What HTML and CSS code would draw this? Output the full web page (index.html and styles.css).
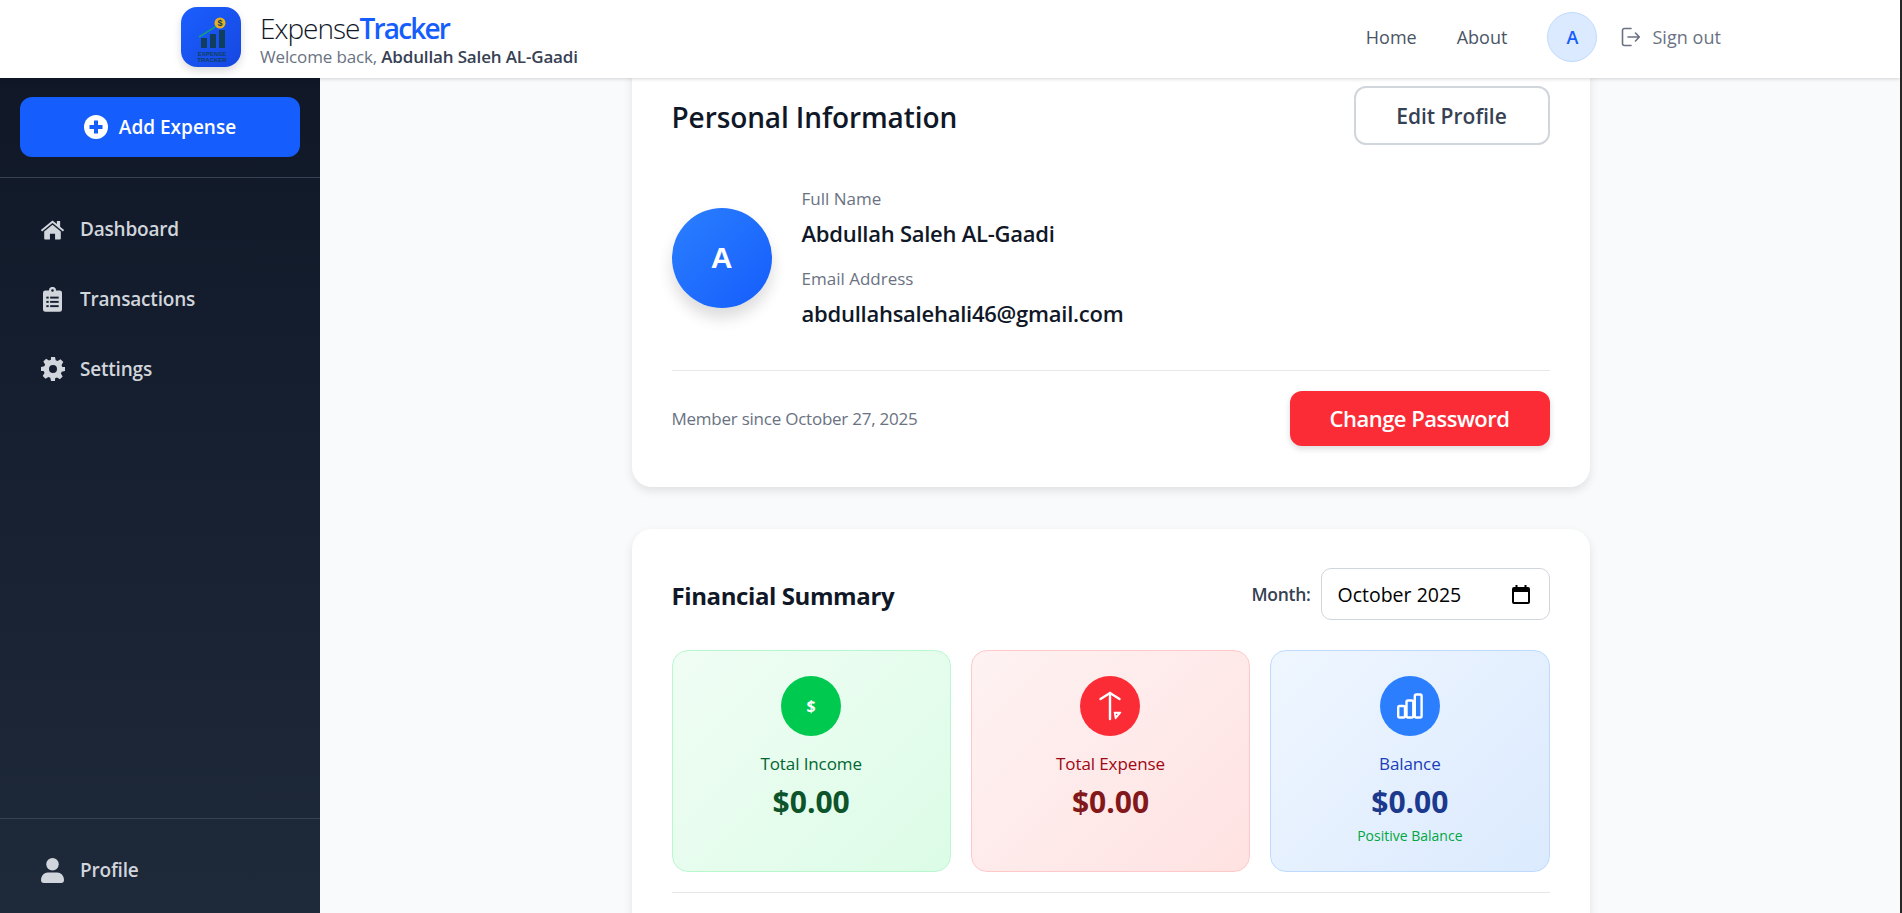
FILE: index.html
```html
<!DOCTYPE html>
<html lang="en">
<head>
<meta charset="utf-8">
<title>ExpenseTracker</title>
<link rel="stylesheet" href="styles.css">
</head>
<body>
<header class="topbar">
  <div class="topbar-inner">
    <div class="brand">
      <div class="logo">
        <svg viewBox="0 0 60 60" width="60" height="60">
          <rect x="20" y="31" width="6" height="10" fill="#0f3f5c"/>
          <rect x="29" y="27" width="6" height="14" fill="#0f3f5c"/>
          <rect x="38" y="23" width="6" height="18" fill="#0f3f5c"/>
          <path d="M18 30 L31 22 L35 19" fill="none" stroke="#12a07a" stroke-width="1.5"/>
          <path d="M38 15 L33 17 L36 21 Z" fill="#12a07a"/>
          <circle cx="39" cy="16" r="5.5" fill="#e8b020"/>
          <text x="39" y="19" class="logo-dollar">$</text>
          <text x="31" y="49" class="logo-text">EXPENSE</text>
          <text x="31" y="55" class="logo-text">TRACKER</text>
        </svg>
      </div>
      <div class="brand-text">
        <div class="brand-title">Expense<span class="brand-accent">Tracker</span></div>
        <div class="brand-sub">Welcome back, <strong>Abdullah Saleh AL-Gaadi</strong></div>
      </div>
    </div>
    <nav class="topnav">
      <a class="topnav-link">Home</a>
      <a class="topnav-link">About</a>
      <div class="user-chip">A</div>
      <a class="signout">
        <svg viewBox="0 0 24 24" width="24" height="24" fill="none" stroke="#6a7282" stroke-width="1.6" stroke-linecap="round" stroke-linejoin="round">
          <path d="M13 3.5H6.5a2 2 0 0 0-2 2v13a2 2 0 0 0 2 2H13"/>
          <path d="M10 12h11M17.5 8l3.8 4-3.8 4"/>
        </svg>
        Sign out
      </a>
    </nav>
  </div>
</header>

<div class="shell">
  <aside class="sidebar">
    <div class="side-top">
      <button class="add-btn">
        <svg viewBox="0 0 24 24" width="24" height="24">
          <circle cx="12" cy="12" r="12" fill="#fff"/>
          <path d="M12 5.500v13M5.500 12h13" stroke="#155dfc" stroke-width="4"/>
        </svg>
        Add Expense
      </button>
    </div>
    <ul class="side-menu">
      <li class="side-item">
        <span class="side-slot">
          <svg viewBox="0 0 26 22" width="25" height="21" fill="#d1d5dc">
            <path d="M13 1.500 0.800 11.600l1.300 1.500L13 4.200l10.900 8.900 1.300-1.500-4.200-3.500V2.200h-3.400v3.100z"/>
            <path d="M13 6 4.300 13.100V20.500a1 1 0 0 0 1 1H10.300v-6h5.400v6h5a1 1 0 0 0 1-1V13.100z"/>
          </svg>
        </span>
        Dashboard
      </li>
      <li class="side-item">
        <span class="side-slot">
          <svg viewBox="0 0 20 26" width="19" height="25">
            <path fill="#d1d5dc" d="M2.500 3.500H6.200a3.800 3.800 0 0 1 7.600 0H17.500A2.500 2.500 0 0 1 20 6v17.500a2.500 2.500 0 0 1-2.500 2.500H2.500A2.500 2.500 0 0 1 0 23.500V6A2.500 2.500 0 0 1 2.500 3.500z"/>
            <circle cx="10" cy="3.600" r="1.300" fill="#151f2e"/>
            <g fill="#151f2e">
              <rect x="3.500" y="10" width="2.500" height="2"/><rect x="7.500" y="10" width="9" height="2"/>
              <rect x="3.500" y="14.500" width="2.500" height="2"/><rect x="7.500" y="14.500" width="9" height="2"/>
              <rect x="3.500" y="19" width="2.500" height="2"/><rect x="7.500" y="19" width="9" height="2"/>
            </g>
          </svg>
        </span>
        Transactions
      </li>
      <li class="side-item">
        <span class="side-slot">
          <svg viewBox="0 0 24 24" width="24" height="24">
            <path fill="#d1d5dc" fill-rule="evenodd" d="M10 0h4l.7 3.300 1.900.8 2.900-1.800 2.800 2.800-1.800 2.900.8 1.900L24 10v4l-3.300.7-.8 1.900 1.800 2.900-2.800 2.800-2.900-1.800-1.900.8L14 24h-4l-.7-3.300-1.900-.8-2.900 1.800-2.800-2.800 1.800-2.900-.8-1.900L0 14v-4l3.300-.7.8-1.900-1.800-2.900 2.800-2.800 2.900 1.800 1.900-.8zM12 8a4 4 0 1 0 0 8 4 4 0 0 0 0-8z"/>
          </svg>
        </span>
        Settings
      </li>
    </ul>
    <div class="side-bottom">
      <div class="side-item">
        <span class="side-slot">
          <svg viewBox="0 0 24 26" width="23" height="25" fill="#d1d5dc">
            <circle cx="12" cy="6.500" r="6.500"/>
            <path d="M0 23c0-5 3.500-8 7-8h10c3.500 0 7 3 7 8 0 2-1 3-3 3H3c-2 0-3-1-3-3z"/>
          </svg>
        </span>
        Profile
      </div>
    </div>
  </aside>

  <main class="content">
    <section class="card card-info">
      <div class="card-head">
        <h2 class="info-title">Personal Information</h2>
        <button class="edit-btn">Edit Profile</button>
      </div>
      <div class="identity">
        <div class="avatar">A</div>
        <dl class="fields">
          <dt class="field-label">Full Name</dt>
          <dd class="field-value">Abdullah Saleh AL-Gaadi</dd>
          <dt class="field-label">Email Address</dt>
          <dd class="field-value">abdullahsalehali46@gmail.com</dd>
        </dl>
      </div>
      <div class="card-foot">
        <span class="member">Member since October 27, 2025</span>
        <button class="password-btn">Change Password</button>
      </div>
    </section>

    <section class="card card-summary">
      <div class="summary-head">
        <h2 class="summary-title">Financial Summary</h2>
        <div class="month">Month:
          <div class="month-input">
            <span class="month-value">October  2025</span>
            <svg viewBox="0 0 18 19" width="18" height="19">
              <path fill="#000" fill-rule="evenodd" d="M3.500 0h2v2h7V0h2v2H16a2 2 0 0 1 2 2v13a2 2 0 0 1-2 2H2a2 2 0 0 1-2-2V4a2 2 0 0 1 2-2h1.500zM2 7v10h14V7z"/>
            </svg>
          </div>
        </div>
      </div>
      <div class="stats">
        <div class="stat stat-green">
          <div class="stat-icon">
            <span class="dollar">$</span>
          </div>
          <div class="stat-label">Total Income</div>
          <div class="stat-value">$0.00</div>
        </div>
        <div class="stat stat-red">
          <div class="stat-icon">
            <svg viewBox="0 0 30 30" width="30" height="30" fill="none" stroke="#fff" stroke-width="2.400" stroke-linecap="round" stroke-linejoin="round">
              <path d="M15 2v26"/>
              <path d="M5.500 8 15 2l9.500 6"/>
              <path d="M19.500 21.500h6l-5 6z" fill="#fff" stroke-width="1.500"/>
              <circle cx="21.500" cy="23.500" r=".8" fill="#fb2c36" stroke="none"/>
            </svg>
          </div>
          <div class="stat-label">Total Expense</div>
          <div class="stat-value">$0.00</div>
        </div>
        <div class="stat stat-blue">
          <div class="stat-icon">
            <svg viewBox="0 0 26 26" width="26" height="26" fill="none" stroke="#fff" stroke-width="2.400" stroke-linejoin="round">
              <rect x="1.200" y="13" width="6.800" height="11.500" rx="1.500"/>
              <rect x="9.500" y="7.500" width="6.800" height="17" rx="1.500"/>
              <rect x="17.800" y="1.500" width="6.800" height="23" rx="1.500"/>
            </svg>
          </div>
          <div class="stat-label">Balance</div>
          <div class="stat-value">$0.00</div>
          <div class="stat-note">Positive Balance</div>
        </div>
      </div>
      <hr class="rule">
    </section>
  </main>
</div>
</body>
</html>
```
FILE: styles.css
```css
* { box-sizing: border-box; }
html { height: 100%; overflow: hidden; background: #262626; }
body { margin: 0; width: 1900px; height: 100%; overflow: hidden; font-family: "Open Sans", "Noto Sans", sans-serif; background: #f9fafb; color: #101828; }

.topbar { height: 78px; background: #fff; box-shadow: 0 1px 4px rgba(0,0,0,.16); position: relative; z-index: 2; }
.topbar-inner { height: 74px; width: 1540px; margin-left: 181px; display: flex; align-items: center; justify-content: space-between; }
.brand { display: flex; align-items: center; gap: 19px; }
.logo { width: 60px; height: 60px; border-radius: 16px; background: linear-gradient(135deg, #1a5fff, #1647e0); box-shadow: 0 4px 8px rgba(0,0,0,.14); }
.logo-dollar { font: 700 9px "Liberation Sans", sans-serif; fill: #0f3f5c; text-anchor: middle; }
.logo-text { font: 700 6px "Liberation Sans", sans-serif; fill: #0f3f5c; text-anchor: middle; }
.brand-text { padding-top: 5px; }
.brand-title { font-size: 28px; font-weight: 300; line-height: 34px; color: #101828; letter-spacing: -1px; }
.brand-accent { color: #155dfc; font-weight: 600; letter-spacing: -1.8px; }
.brand-sub { font-size: 17px; line-height: 24px; color: #6a7282; letter-spacing: -.15px; }
.brand-sub strong { color: #364153; font-weight: 600; }
.topnav { display: flex; align-items: center; font-size: 18px; color: #4a5565; }
.topnav-link { margin-right: 40px; }
.user-chip { width: 50px; height: 50px; border-radius: 50%; background: #dbeafe; border: 1px solid #bedbff; display: flex; align-items: center; justify-content: center; color: #155dfc; font-size: 18px; font-weight: 600; }
.signout { display: flex; align-items: center; gap: 10px; margin-left: 21px; color: #6a7282; letter-spacing: .05px; }

.shell { display: flex; height: 835px; }
.sidebar { width: 320px; flex: none; display: flex; flex-direction: column; background: linear-gradient(180deg, #101828, #1e2939); color: #d1d5dc; }
.side-top { padding: 19px 20px; border-bottom: 1px solid #364153; height: 100px; }
.add-btn { width: 280px; height: 60px; border: 0; border-radius: 12px; background: #155dfc; color: #fff; font: 600 19px "Open Sans", sans-serif; display: flex; align-items: center; justify-content: center; gap: 11px; }
.side-menu { list-style: none; margin: 0; padding: 16px 0 0; flex: 1; }
.side-item { height: 70px; display: flex; align-items: center; padding-left: 40px; font-size: 19px; font-weight: 600; letter-spacing: -.2px; }
.side-slot { width: 25px; margin-right: 15px; display: flex; justify-content: center; }
.side-bottom { border-top: 1px solid #364153; padding: 16px 0 0; height: 95px; }

.content { flex: 1; overflow: hidden; padding: 0 310.500px 0 311.500px; }
.card { background: #fff; border-radius: 20px; box-shadow: 0 4px 10px rgba(0,0,0,.1); padding: 0 40px; }
.card-info { margin-top: -32px; height: 441px; padding-top: 40px; }
.card-head { display: flex; justify-content: space-between; align-items: center; }
.info-title { margin: 2px 0 0; font-size: 28px; font-weight: 600; letter-spacing: -.1px; }
.edit-btn { width: 196px; height: 59px; background: #fff; border: 2px solid #d1d5dc; border-radius: 12px; padding-top: 1px; font: 600 21px "Open Sans", sans-serif; color: #364153; }
.identity { display: flex; align-items: center; gap: 30px; height: 226px; border-bottom: 1px solid #e5e7eb; margin-bottom: 20px; }
.avatar { width: 100px; height: 100px; border-radius: 50%; background: linear-gradient(135deg, #2b7fff, #155dfc); box-shadow: 0 10px 15px rgba(0,0,0,.14); color: #fff; font: 700 30px "Liberation Sans", sans-serif; display: flex; align-items: center; justify-content: center; }
.fields { margin: 0; }
.field-label { font-size: 17px; font-weight: 500; color: #6a7282; line-height: 24px; margin-bottom: 6px; }
.field-value { margin: 0 0 18px; font-size: 22px; font-weight: 600; line-height: 32px; color: #101828; letter-spacing: -.25px; }
.field-value:last-child { margin-bottom: 0; }
.card-foot { display: flex; justify-content: space-between; align-items: center; }
.member { font-size: 17px; color: #6a7282; letter-spacing: -.24px; }
.password-btn { width: 260px; height: 55px; border: 0; border-radius: 12px; padding-bottom: 2px; background: #fb2c36; color: #fff; font: 600 22px "Open Sans", sans-serif; letter-spacing: -.5px; box-shadow: 0 3px 6px rgba(0,0,0,.14); }

.card-summary { margin-top: 42px; height: 420px; padding-top: 39px; }
.summary-head { display: flex; justify-content: space-between; align-items: center; height: 52px; }
.summary-title { margin: 2px 0 0; font-size: 24px; font-weight: 700; letter-spacing: -.4px; }
.month { display: flex; align-items: center; gap: 10px; font-size: 17.500px; font-weight: 600; color: #364153; letter-spacing: -.3px; }
.month-input { width: 229px; height: 52px; border: 1px solid #d1d5dc; border-radius: 10px; background: #fff; padding: 0 19px 0 16px; display: flex; align-items: center; justify-content: space-between; font-size: 19.500px; font-weight: 400; color: #000; letter-spacing: 0; word-spacing: -2.500px; }
.month-value { white-space: pre; }
.stats { display: grid; grid-template-columns: repeat(3, 1fr); gap: 20px; margin-top: 30px; }
.stat { height: 222px; border-radius: 16px; border: 1px solid; padding-top: 25px; display: flex; flex-direction: column; align-items: center; }
.stat-icon { width: 60px; height: 60px; border-radius: 50%; display: flex; align-items: center; justify-content: center; margin-bottom: 14px; color: #fff; }
.dollar { font-size: 16px; font-weight: 700; }
.stat-label { font-size: 17px; font-weight: 500; line-height: 28px; letter-spacing: -.1px; }
.stat-value { font-size: 30px; font-weight: 700; line-height: 48px; }
.stat-note { font-size: 14px; line-height: 20px; color: #00a63e; }
.stat-green { background: linear-gradient(135deg, #f0fdf4, #dcfce7); border-color: #b9f8cf; }
.stat-green .stat-icon { background: #00c950; }
.stat-green .stat-label { color: #016630; }
.stat-green .stat-value { color: #0d542b; }
.stat-red { background: linear-gradient(135deg, #fef2f2, #ffe2e2); border-color: #ffc9c9; }
.stat-red .stat-icon { background: #fb2c36; }
.stat-red .stat-label { color: #9f0712; }
.stat-red .stat-value { color: #82181a; }
.stat-blue { background: linear-gradient(135deg, #eff6ff, #dbeafe); border-color: #bedbff; }
.stat-blue .stat-icon { background: #2b7fff; }
.stat-blue .stat-label { color: #193cb8; }
.stat-blue .stat-value { color: #1c398e; }
.rule { border: 0; border-top: 1px solid #e5e7eb; margin: 20px 0 0; }
```
